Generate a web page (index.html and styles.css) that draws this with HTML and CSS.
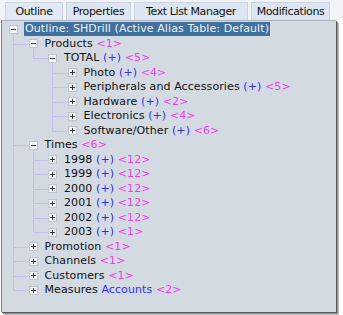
FILE: index.html
```html
<!DOCTYPE html>
<html>
<head>
<meta charset="utf-8">
<link rel="stylesheet" href="styles.css">
</head>
<body>
<div class="tabs">
  <div class="tab active t-outline">Outline</div>
  <div class="tab t-props">Properties</div>
  <div class="tab t-tlm">Text List Manager</div>
  <div class="tab t-mods">Modifications</div>
</div>
<div class="panel">
  <div class="node root">
    <div class="row"><span class="box minus"></span><span class="label sel">Outline: SHDrill (Active Alias Table: Default)</span></div>
    <div class="children">
      <div class="node">
        <div class="row"><span class="box minus"></span><span class="label">Products <span class="m">&lt;1&gt;</span></span></div>
        <div class="children">
          <div class="node">
            <div class="row"><span class="box minus"></span><span class="label">TOTAL <span class="b">(+)</span> <span class="m">&lt;5&gt;</span></span></div>
            <div class="children">
              <div class="node"><div class="row"><span class="box"></span><span class="label">Photo <span class="b">(+)</span> <span class="m">&lt;4&gt;</span></span></div></div>
              <div class="node"><div class="row"><span class="box"></span><span class="label">Peripherals and Accessories <span class="b">(+)</span> <span class="m">&lt;5&gt;</span></span></div></div>
              <div class="node"><div class="row"><span class="box"></span><span class="label">Hardware <span class="b">(+)</span> <span class="m">&lt;2&gt;</span></span></div></div>
              <div class="node"><div class="row"><span class="box"></span><span class="label">Electronics <span class="b">(+)</span> <span class="m">&lt;4&gt;</span></span></div></div>
              <div class="node"><div class="row"><span class="box"></span><span class="label">Software/Other <span class="b">(+)</span> <span class="m">&lt;6&gt;</span></span></div></div>
            </div>
          </div>
        </div>
      </div>
      <div class="node">
        <div class="row"><span class="box minus"></span><span class="label">Times <span class="m">&lt;6&gt;</span></span></div>
        <div class="children">
          <div class="node"><div class="row"><span class="box"></span><span class="label">1998 <span class="b">(+)</span> <span class="m">&lt;12&gt;</span></span></div></div>
          <div class="node"><div class="row"><span class="box"></span><span class="label">1999 <span class="b">(+)</span> <span class="m">&lt;12&gt;</span></span></div></div>
          <div class="node"><div class="row"><span class="box"></span><span class="label">2000 <span class="b">(+)</span> <span class="m">&lt;12&gt;</span></span></div></div>
          <div class="node"><div class="row"><span class="box"></span><span class="label">2001 <span class="b">(+)</span> <span class="m">&lt;12&gt;</span></span></div></div>
          <div class="node"><div class="row"><span class="box"></span><span class="label">2002 <span class="b">(+)</span> <span class="m">&lt;12&gt;</span></span></div></div>
          <div class="node"><div class="row"><span class="box"></span><span class="label">2003 <span class="b">(+)</span> <span class="m">&lt;1&gt;</span></span></div></div>
        </div>
      </div>
      <div class="node"><div class="row"><span class="box"></span><span class="label">Promotion <span class="m">&lt;1&gt;</span></span></div></div>
      <div class="node"><div class="row"><span class="box"></span><span class="label">Channels <span class="m">&lt;1&gt;</span></span></div></div>
      <div class="node"><div class="row"><span class="box"></span><span class="label">Customers <span class="m">&lt;1&gt;</span></span></div></div>
      <div class="node"><div class="row"><span class="box"></span><span class="label">Measures <span class="b">Accounts</span> <span class="m">&lt;2&gt;</span></span></div></div>
    </div>
  </div>
</div>
</body>
</html>
```

FILE: styles.css
```css
html, body {
  margin: 0;
  padding: 0;
  background: #ffffff;
}
body {
  width: 343px;
  height: 315px;
  overflow: hidden;
  font-family: "DejaVu Sans", sans-serif;
  font-size: 11px;
  letter-spacing: 0.1px;
  color: #111111;
}
.tabs {
  display: flex;
  gap: 3px;
  height: 20px;
  padding: 2px 0 0 5px;
  box-sizing: border-box;
  background: #f1f3f6;
}
.tab {
  flex: none;
  height: 18px;
  line-height: 17px;
  box-sizing: border-box;
  background: #dde5f0;
  border: 1px solid #c9d3e1;
  border-bottom: none;
  white-space: nowrap;
  text-align: center;
  letter-spacing: -0.4px;
}
.t-outline { width: 58px; }
.t-props { width: 65px; }
.t-tlm { width: 114px; }
.t-mods { width: 79px; }
.tab.active {
  background: #e3e9f2;
}
.panel {
  margin-left: 1px;
  width: 335px;
  height: 292px;
  box-sizing: border-box;
  padding-top: 1px;
  background: #d3dae2;
  border-left: 1px solid #7c7f84;
  border-top: 1px solid #aab2bc;
  box-shadow: 1px 1px 0 #5a5c60, 2px 2px 0 #8a8c90, 3px 3px 0 #c4c6c9;
}
.node {
  position: relative;
}
.row {
  display: flex;
  align-items: center;
  height: 14.5px;
  padding-left: 7px;
  white-space: nowrap;
}
.box {
  position: relative;
  flex: none;
  width: 9px;
  height: 9px;
  box-sizing: border-box;
  border: 1px solid #bcc4ce;
  background: #f2f4f7;
  margin-right: 7px;
  z-index: 1;
}
.box::before {
  content: "";
  position: absolute;
  left: 1px;
  top: 3px;
  width: 5px;
  height: 1px;
  background: #3c3c3c;
}
.box::after {
  content: "";
  position: absolute;
  left: 3px;
  top: 1px;
  width: 1px;
  height: 5px;
  background: #3c3c3c;
}
.box.minus::after {
  display: none;
}
.label {
  line-height: 14px;
}
.label.sel {
  background: #40709e;
  color: #eef3f8;
  margin-left: -1px;
  padding: 0 1px;
}
.b {
  color: #2f2ff0;
}
.m {
  color: #f03cf0;
}
.children {
  margin-left: 19.5px;
}
.children > .node::before {
  content: "";
  position: absolute;
  left: -8.5px;
  top: -3px;
  bottom: 0;
  border-left: 1px solid #c2c2ec;
}
.children > .node:last-child::before {
  bottom: auto;
  height: 10px;
}
.children > .node::after {
  content: "";
  position: absolute;
  left: -8.5px;
  top: 7px;
  width: 15px;
  border-top: 1px solid #c2c2ec;
}
```
